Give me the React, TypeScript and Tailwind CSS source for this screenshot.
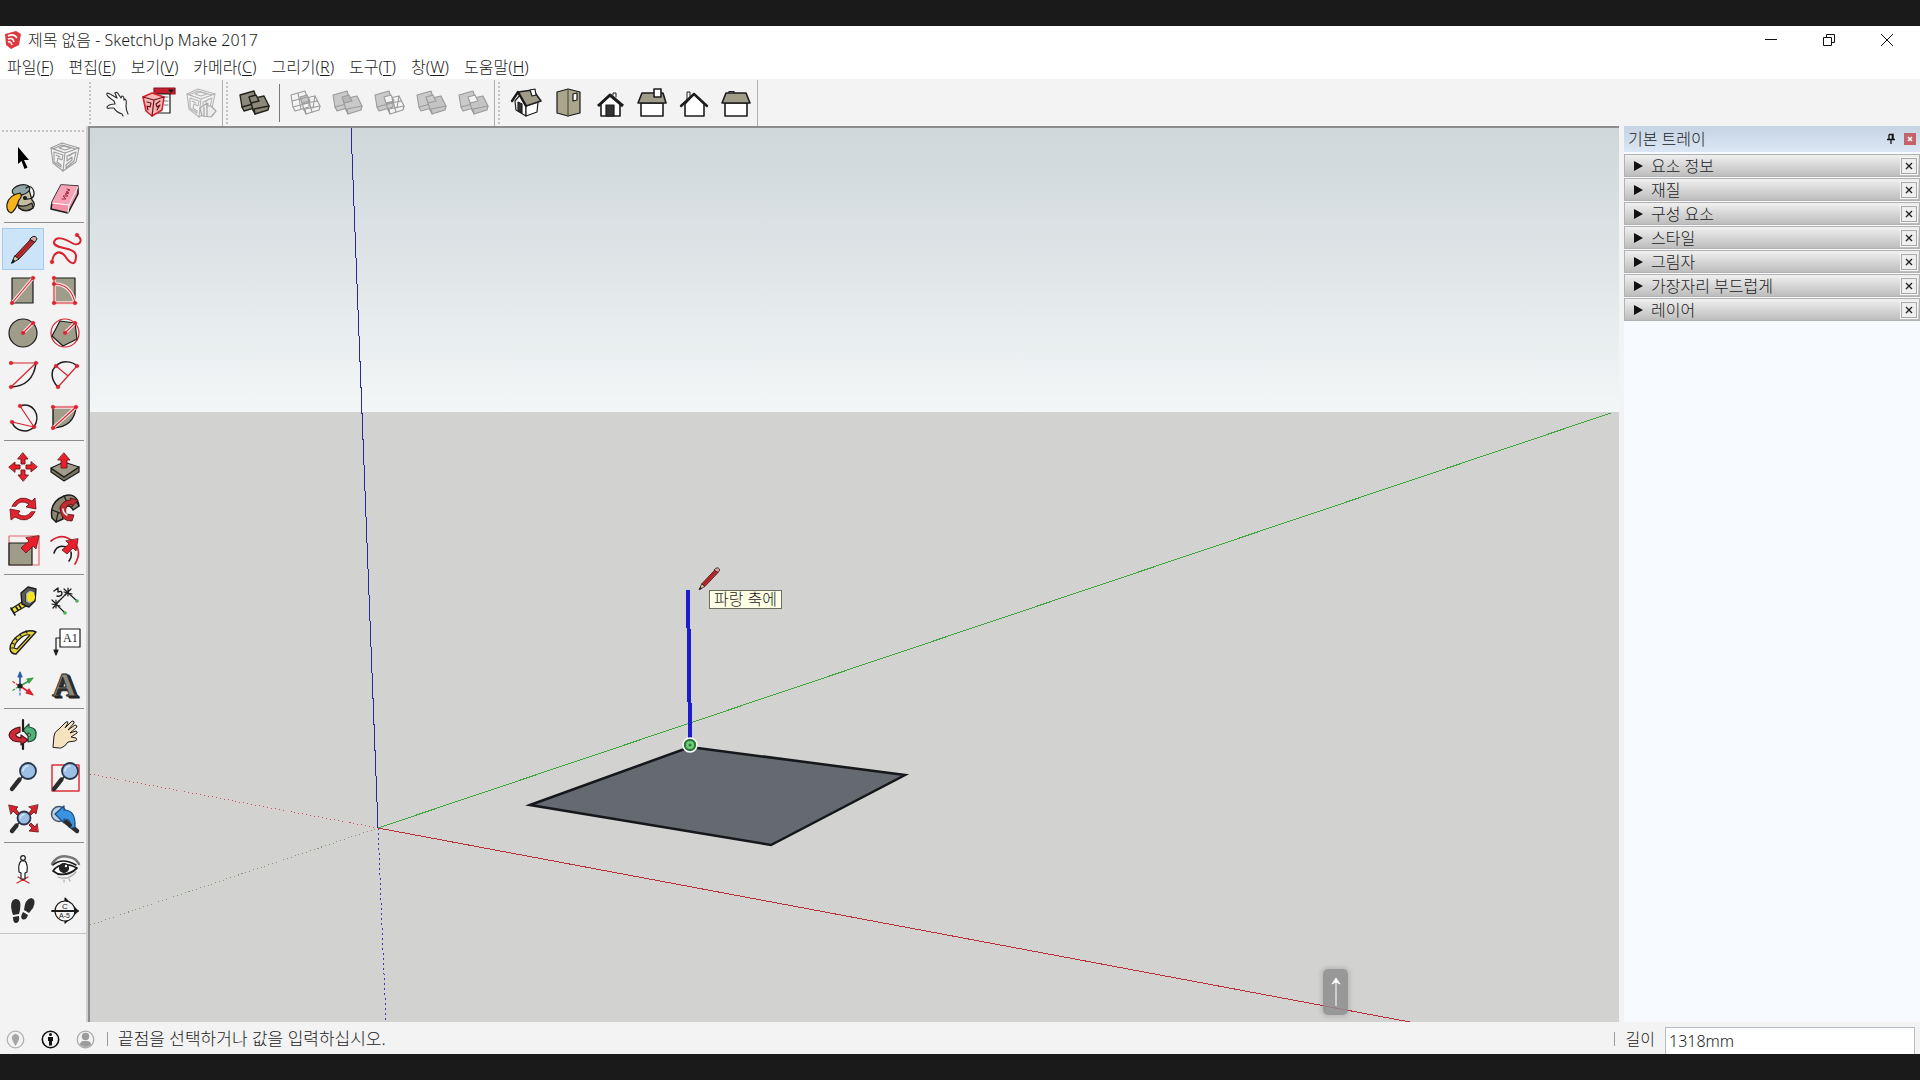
import type { ReactNode } from 'react';

type Tool = { label: string; icon: ReactNode; active?: boolean };

const RED = '#d8232f';
const INK = '#1c1c1c';
const STONE = '#9f9c8a';

/* ---------- icon helpers ---------- */

function Icon({ children }: { children: ReactNode }) {
  return (
    <svg
      viewBox="0 0 42 42"
      className="h-[42px] w-[42px]"
      fill="none"
      stroke={INK}
      strokeWidth="1.2"
      strokeLinejoin="round"
      strokeLinecap="round"
      aria-hidden="true"
    >
      {children}
    </svg>
  );
}

function Dots({ at }: { at: number[][] }) {
  return (
    <>
      {at.map(([x, y]) => (
        <circle key={`${x}-${y}`} cx={x} cy={y} r="1.8" fill={RED} stroke={RED} strokeWidth="0.6" />
      ))}
    </>
  );
}

function RedLine({ d }: { d: string }) {
  return (
    <>
      <path d={d} stroke="#fbe3e3" strokeWidth="3.4" />
      <path d={d} stroke={RED} strokeWidth="1.1" />
    </>
  );
}

function Pencil() {
  return (
    <>
      <path d="M13 28 L29 11 L33 14 L17 31 Z" fill="#c42a2e" strokeWidth="1" />
      <path d="M15 29 L31 12" stroke="#8d1a1e" strokeWidth="1" />
      <path d="M28 11 L30 9 Q34 7 35 11 L33 14 Z" fill="#d9a5a0" strokeWidth="1" />
      <path d="M13 28 L17 31 L10 35 Z" fill="#d8c69c" strokeWidth="1" />
      <path d="M11.5 32 L13 33.4 L10 35 Z" fill={INK} strokeWidth="1" />
    </>
  );
}

function Lens({ x, y, r }: { x: number; y: number; r: number }) {
  const hx = x - r * 0.7;
  const hy = y + r * 0.7;
  return (
    <>
      <path d={`M${hx} ${hy} L9 33`} stroke="#2b2b2b" strokeWidth="1.6" />
      <path d={`M${hx - 3} ${hy + 3} L10 33`} stroke="#2b2b2b" strokeWidth="4.4" />
      <circle cx={x} cy={y} r={r} fill="#9cbfe6" stroke="#28374a" strokeWidth="1.8" />
      <path d={`M${x - r + 3} ${y} A${r - 3} ${r - 3} 0 0 1 ${x} ${y - r + 3}`} stroke="#d8e8f8" strokeWidth="1.4" />
    </>
  );
}

// two overlapping boxes, drawn filled or as wireframe
function Solids({ back, front, mid, dark }: { back: string; front: string; mid: string; dark?: boolean }) {
  const line = dark ? '#24241f' : '#9a9a9a';
  return (
    <Icon>
      <g stroke={line} strokeWidth={dark ? 1.4 : 1.1}>
        <path d="M7 13 L21 9 L25 21 L25 25 L11 29 L9 25 Z" fill={back} />
        <path d="M9 25 L24 21" />
        <path d="M17 17 L31 14 L36 24 L35 28 L22 32 L20 28 Z" fill={front} />
        <path d="M20 28 L21 27 L36 24 M21 27 L22 32" />
        <path d="M16 15 L23 13 L26 19 L18 21 Z" fill={mid} />
        {back === 'none' && <path d="M14 11 L17 27 M8 19 L23 15" />}
        {front === 'none' && <path d="M24 16 L28 30 M18 22 L33 19 M31 14 L29 26" />}
      </g>
    </Icon>
  );
}

function CubeMark({ color }: { color: string }) {
  return (
    <g stroke={color} strokeWidth="1.1">
      <path d="M7 12 L18 7 L35 12 L32 26 L19 35 L9 27 Z" />
      <path d="M9 13 L18 9 L32 13 L21 17 Z M7 12 L21 17 L19 35 M35 12 L21 17" />
      <path d="M10 16 L19 19 L18 24 L14 22 L13 26 L17 29 L17 31 L10 26 Z" />
      <path d="M32 16 L23 20 L23 25 L28 21 L28 24 L22 29 L22 32 L30 25 Z" />
      <path d="M15 12 L20 10 L27 12 L21 14 Z M12 19 L16 21 M25 20 L29 17" />
    </g>
  );
}

/* ---------- top toolbar ---------- */

const startTools: Tool[] = [
  {
    label: '손',
    icon: (
      <Icon>
        <path
          d="M11 13 Q10 10 14 12 L21 16 L19 11 Q21 9 23 13 L25 16 L26 14 Q28 14 28 18 L29 17 Q31 18 30 24 Q30 28 32 32 M11 13 Q12 15 18 19 L19 22 Q13 22 11 25 Q11 27 14 26 L18 26 Q20 30 26 32 L27 34"
          stroke="#333"
          fill="#fbfbfb"
        />
      </Icon>
    ),
  },
  {
    label: '3D Warehouse',
    icon: (
      <Icon>
        <rect x="16" y="6" width="21" height="6" fill="#c4202f" stroke="#8b1220" />
        <path d="M31 8 H35 L33 10 Z" fill={INK} />
        <path d="M19 12 H32 V31 H20 Z" fill="#fff" />
        <path d="M26 15 H30 M26 19 H30 M26 23 H30" stroke="#777" />
        <path d="M5 15 L14 11 L26 15 L24 28 L14 34 L8 29 Z" fill="#f3b9b9" stroke={RED} strokeWidth="1.6" />
        <path d="M5 15 L16 18 L14 34 M16 18 L26 15 M9 20 L13 21 L12 25 L9 24 L10 28 M22 19 L18 22 L19 25 L22 23 L19 28" stroke="#701018" />
      </Icon>
    ),
  },
  {
    label: '구성 요소 공유',
    icon: (
      <Icon>
        <CubeMark color="#b4b4b4" />
        <path d="M20 26 L27 21 L27 24 L31 24 L36 29 L31 35 L22 34 Z" fill="#ececec" stroke="#a8a8a8" />
        <path d="M24 25 V34 M27 24 V34" stroke="#a8a8a8" />
      </Icon>
    ),
  },
];

const shellTool: Tool = {
  label: '외부 쉘',
  icon: <Solids dark back="#8c897a" front="#8c897a" mid="#8c897a" />,
};

const solidTools: Tool[] = [
  { label: '교차', icon: <Solids back="none" front="none" mid="#c6c6c6" /> },
  { label: '결합', icon: <Solids back="#cacaca" front="#cacaca" mid="#b6b6b6" /> },
  { label: '빼기', icon: <Solids back="#cacaca" front="none" mid="#f3f3f3" /> },
  { label: '트림', icon: <Solids back="#cacaca" front="#c4c4c4" mid="#cacaca" /> },
  { label: '분할', icon: <Solids back="#cacaca" front="#c4c4c4" mid="#f3f3f3" /> },
];

const viewTools: Tool[] = [
  {
    label: '등각투영',
    icon: (
      <Icon>
        <path d="M10 19 L15 13 L21 23 L21 34 L11 28 Z" fill="#fff" />
        <path d="M21 24 L33 20 L32 30 L21 34 Z" fill="#fff" />
        <path d="M13 20 L17 22 V31 L13 28 Z" fill="#333" />
        <path d="M13 10 L28 8 L36 19 L21 24 Z" fill={STONE} stroke="#222" strokeWidth="1.6" />
        <path d="M7 19 L13 10 L21 24" strokeWidth="2.4" />
        <path d="M25 8 L30 7 L31 13 L27 14 Z" fill="#fff" />
      </Icon>
    ),
  },
  {
    label: '위',
    icon: (
      <Icon>
        <path d="M10 10 L21 7 L33 10 V31 L21 34 L10 31 Z" fill="#aaa58d" />
        <path d="M21 7 V34" stroke="#55523f" />
        <path d="M26 12 L30 11 V18 L26 19 Z" fill="#fff" />
      </Icon>
    ),
  },
  {
    label: '앞',
    icon: (
      <Icon>
        <path d="M12 22 V34 H31 V22 L21 13 Z" fill="#fff" strokeWidth="1.6" />
        <path d="M24 13 V11 H27 V15" strokeWidth="1" />
        <path d="M9 24 L21 13 L34 24" strokeWidth="3" strokeLinecap="butt" />
        <rect x="17" y="23" width="8" height="11" fill="#333" />
      </Icon>
    ),
  },
  {
    label: '오른쪽',
    icon: (
      <Icon>
        <rect x="10" y="21" width="22" height="13" fill="#fff" strokeWidth="1.6" />
        <path d="M11 11 H32 L35 21 H7 Z" fill={STONE} strokeWidth="1.6" />
        <rect x="23" y="7" width="7" height="8" fill="#fff" strokeWidth="1.6" />
      </Icon>
    ),
  },
  {
    label: '뒤',
    icon: (
      <Icon>
        <path d="M14 18 V10 H17 V16" fill="#fff" strokeWidth="1" />
        <path d="M12 22 V34 H31 V22 L21 12 Z" fill="#fff" strokeWidth="1.6" />
        <path d="M8 24 L21 12 L34 24" strokeWidth="2.4" />
      </Icon>
    ),
  },
  {
    label: '왼쪽',
    icon: (
      <Icon>
        <rect x="10" y="21" width="22" height="13" fill="#fff" strokeWidth="1.6" />
        <path d="M14 11 V9.5 H19 V11" />
        <path d="M11 11 H31 L35 21 H7 Z" fill={STONE} strokeWidth="1.6" />
      </Icon>
    ),
  },
];

/* ---------- left palette ---------- */

const palette: Tool[][] = [
  [
    {
      label: '선택',
      icon: (
        <Icon>
          <path d="M16 11 V28 L19.5 25 L22.5 33 L25.5 31.5 L22 24 H27 Z" fill="#000" stroke="none" />
        </Icon>
      ),
    },
    { label: '구성 요소 만들기', icon: <Icon><CubeMark color="#9b9b9b" /></Icon> },
    {
      label: '페인트통',
      icon: (
        <Icon>
          <path d="M11 12 L17 30 Q24 36 31 30 Q34 26 30 22 L26 8 Z" fill="#c5bd9f" />
          <path d="M17 30 Q24 35 31 30 L30 25 Q22 30 16 27 Z" fill="#8d8770" />
          <ellipse cx="19" cy="12" rx="9" ry="5" transform="rotate(-14 19 12)" fill="#8fa5a6" />
          <path d="M5 26 Q7 17 18 15 Q21 18 17 22 Q14 32 9 35 Q4 33 5 26 Z" fill="#f6b31c" />
          <path d="M24 10 Q30 6 32 14 Q33 22 23 21" />
          <circle cx="23" cy="20" r="1.5" fill={INK} />
        </Icon>
      ),
    },
    {
      label: '지우개',
      icon: (
        <Icon>
          <path d="M17 7 L34 8 L34 16 L24 35 L7 31 L8 24 Z" fill="#f28fa6" strokeWidth="1.6" />
          <path d="M17 7 L34 8 L25 27 L8 24 Z" fill="#f6a3b5" stroke="none" />
          <path d="M8 25 L25 27 L34 9 M25 27 L24 35" stroke="#fff" strokeWidth="1" />
          <path d="M23 11 L26 12 L22 14 L25 15 L21 16 L24 18 L19 18 L22 21 L18 21" stroke="#9c2a43" strokeWidth="1" />
        </Icon>
      ),
    },
  ],
  [
    { label: '선', active: true, icon: <Icon><Pencil /></Icon> },
    {
      label: '자유곡선',
      icon: (
        <Icon>
          <path
            d="M33 7 C41 13 34 19 28 15 C20 10 12 8 10 14 C9 22 32 18 32 28 C32 39 26 36 21 28 C15 21 9 25 8 34"
            stroke={RED}
            strokeWidth="2"
          />
          <Dots at={[[33, 7], [8, 34]]} />
        </Icon>
      ),
    },
    {
      label: '직사각형',
      icon: (
        <Icon>
          <rect x="10" y="8" width="21" height="25" fill={STONE} />
          <RedLine d="M10 33 L31 8" />
          <Dots at={[[10, 33], [31, 8]]} />
        </Icon>
      ),
    },
    {
      label: '회전된 직사각형',
      icon: (
        <Icon>
          <rect x="10" y="8" width="21" height="25" fill={STONE} />
          <RedLine d="M10 14 Q27 14 31 33 H10 V8" />
          <Dots at={[[10, 8], [10, 14], [10, 33], [31, 33]]} />
        </Icon>
      ),
    },
    {
      label: '원',
      icon: (
        <Icon>
          <circle cx="21" cy="21" r="14" fill={STONE} />
          <RedLine d="M21 21 L31 11" />
          <Dots at={[[21, 21], [31, 11]]} />
        </Icon>
      ),
    },
    {
      label: '다각형',
      icon: (
        <Icon>
          <circle cx="21" cy="21" r="14" stroke={RED} />
          <path d="M16 9 L31 11 L33 27 L19 34 L8 24 Z" fill={STONE} />
          <RedLine d="M21 21 L31 11" />
          <Dots at={[[21, 21], [31, 11]]} />
        </Icon>
      ),
    },
    {
      label: '호',
      icon: (
        <Icon>
          <path d="M34 9 Q31 32 9 33" strokeWidth="1.5" />
          <path d="M9 9 H34 L9 33" stroke={RED} />
          <Dots at={[[9, 9], [34, 9], [9, 33]]} />
        </Icon>
      ),
    },
    {
      label: '2점 호',
      icon: (
        <Icon>
          <path d="M14 33 C6 25 7 16 12 12 C18 6 28 7 33 12" strokeWidth="1.5" />
          <path d="M14 33 L33 12 M12 12 L24 22" stroke={RED} />
          <Dots at={[[14, 33], [33, 12], [12, 12]]} />
        </Icon>
      ),
    },
    {
      label: '3점 호',
      icon: (
        <Icon>
          <path d="M18 10 C30 5 40 19 32 31 C25 38 13 35 10 26" strokeWidth="1.5" />
          <path d="M18 10 L32 31 L10 26" stroke={RED} />
          <Dots at={[[18, 10], [32, 31], [10, 26]]} />
        </Icon>
      ),
    },
    {
      label: '파이',
      icon: (
        <Icon>
          <path d="M9 11 H32 Q30 31 9 32 Z" fill={STONE} strokeWidth="1.4" />
          <RedLine d="M9 32 L32 11 H9" />
          <Dots at={[[9, 11], [32, 11], [9, 32]]} />
        </Icon>
      ),
    },
  ],
  [
    {
      label: '이동',
      icon: (
        <Icon>
          {[0, 90, 180, 270].map((a) => (
            <path
              key={a}
              d="M21 7 L26 13 H23 V18 H19 V13 H16 Z"
              transform={`rotate(${a} 21 21)`}
              fill="#e8202c"
              stroke="#611"
              strokeWidth="0.9"
            />
          ))}
        </Icon>
      ),
    },
    {
      label: '밀기/끌기',
      icon: (
        <Icon>
          <path d="M7 22 L20 31 L35 21 V26 L20 35 L7 26 Z" fill="#76735f" />
          <path d="M7 22 L20 16 L35 21 L20 31 Z" fill={STONE} />
          <path d="M20 7 L26 14 H23 V22 H17 V14 H14 Z" fill="#e8202c" stroke="#611" strokeWidth="0.8" />
        </Icon>
      ),
    },
    {
      label: '회전',
      icon: (
        <Icon>
          <g fill="#e02430" stroke="#611" strokeWidth="0.8">
            <path d="M10 18 Q17 5 30 13 L33 10 L34 21 L24 19 L27 16 Q18 11 14 18 Z" />
            <path d="M33 24 Q26 37 13 29 L9 32 L8 21 L18 23 L16 26 Q24 31 29 24 Z" />
          </g>
        </Icon>
      ),
    },
    {
      label: '따라가기',
      icon: (
        <Icon>
          <path d="M8 30 Q5 14 20 8 Q33 4 35 18 L29 22 Q25 14 18 22 L19 31 L12 34 Z" fill="#8a8671" strokeWidth="1.5" />
          <path d="M20 8 L24 16 M35 18 L31 12 M8 22 L16 25 M12 34 L14 25" />
          <path d="M16 20 Q18 12 27 12 L26 10 L34 12 L28 19 L28 16 Q20 17 22 26 L30 27 L28 33 Q17 34 16 20 Z" fill="#c42a31" stroke="#511" strokeWidth="0.8" />
          <path d="M19 21 Q19 25 23 27" stroke="#f5f5f5" strokeWidth="1.5" />
        </Icon>
      ),
    },
    {
      label: '배율',
      icon: (
        <Icon>
          <rect x="7" y="6" width="30" height="29" stroke="#e06a70" fill="#f8efef" />
          <rect x="7" y="13" width="23" height="22" fill={STONE} />
          <path d="M37 6 L34 19 L31 16 L24 23 L19 18 L27 11 L24 8 Z" fill="#e8202c" stroke="#611" strokeWidth="0.8" />
        </Icon>
      ),
    },
    {
      label: '오프셋',
      icon: (
        <Icon>
          <path d="M7 11 Q20 1 31 14 Q38 22 31 34" stroke={RED} strokeWidth="1.7" />
          <path d="M10 23 Q13 14 22 17 M27 22 Q28 27 25 31" strokeWidth="1.6" />
          <path d="M34 9 L32 21 L29 18 L23 24 L18 20 L25 14 L22 11 Z" fill="#e8202c" stroke="#611" strokeWidth="0.8" />
        </Icon>
      ),
    },
  ],
  [
    {
      label: '줄자',
      icon: (
        <Icon>
          <path d="M9 29 L20 22 L24 26 L12 33 Z" fill="#f2e22c" />
          <path d="M9 28 L13 35 M14 27 L16 30 M17 25 L19 28" strokeWidth="1.6" />
          <path d="M19 13 L26 7 L34 9 L33 21 L27 27 L20 24 Z" fill="#5a5a5a" strokeWidth="1.4" />
          <path d="M24 13 L28 10 L33 12 L32 20 L28 24 L24 22 Z" fill="#b9b9b9" strokeWidth="0.6" />
          <ellipse cx="29" cy="17" rx="4" ry="5" fill="#f4e61e" stroke="none" />
        </Icon>
      ),
    },
    {
      label: '치수',
      icon: (
        <Icon>
          <path d="M12 24 L24 12 M20 9 L33 21 M8 20 L21 33" />
          <path d="M24 8 V16 M20 12 L28 14 M21 15 L27 9 M12 20 V28 M8 24 L16 26 M9 28 L15 21" strokeWidth="1.2" />
          <path d="M10 11 L14 8 L14 12 Q18 10 18 14 Q17 17 13 16" strokeWidth="1.4" />
          <circle cx="33" cy="21" r="1.8" fill="#46b552" stroke="none" />
          <circle cx="21" cy="33" r="1.8" fill="#46b552" stroke="none" />
        </Icon>
      ),
    },
    {
      label: '각도기',
      icon: (
        <Icon>
          <path d="M14 32 L34 10 Q28 7 20 11 Q8 18 8 27 Q9 32 14 32 Z" fill="#e5d23a" strokeWidth="1.4" />
          <path d="M15 27 L28 13 Q24 12 20 15 Q13 20 12 26 Z" fill="#f5f5f5" />
          <path d="M10 21 L12 22 M13 16 L15 18 M18 12 L19 14 M9 26 H11 M24 9 L25 11" />
        </Icon>
      ),
    },
    {
      label: '텍스트',
      icon: (
        <Icon>
          <rect x="16" y="7" width="20" height="18" fill="#fff" />
          <text x="19" y="20" fontSize="12" fill="#222" stroke="none" fontFamily="Liberation Serif, serif">A1</text>
          <path d="M16 16 H12 V28" />
          <path d="M10 28 H14 L12 33 Z" fill={INK} />
        </Icon>
      ),
    },
    {
      label: '축',
      icon: (
        <Icon>
          <path d="M18 22 V13" stroke="#2b5fae" strokeWidth="1.8" />
          <path d="M16 13 L18 8 L20 13 Z" fill="#2b5fae" stroke="#2b5fae" />
          <path d="M18 22 L27 17" stroke="#3ca04a" strokeWidth="1.8" />
          <path d="M25 15 L31 14 L27 19 Z" fill="#3ca04a" stroke="#3ca04a" />
          <path d="M18 22 L27 28" stroke={RED} strokeWidth="1.8" />
          <path d="M27 25 L31 31 L24 29 Z" fill={RED} stroke={RED} />
          <path d="M18 25 V33" stroke="#2b5fae" strokeDasharray="2 2" />
          <path d="M16 23 L10 27" stroke="#3ca04a" strokeDasharray="2 2" />
          <path d="M16 21 L10 17" stroke={RED} strokeDasharray="2 2" />
          <circle cx="18" cy="22" r="2" fill={INK} />
        </Icon>
      ),
    },
    {
      label: '3D 텍스트',
      icon: (
        <Icon>
          <g fontFamily="Liberation Serif, serif" fontWeight="700" fontSize="34" strokeWidth="0.8">
            <text x="11" y="34" fill="#3a3a36" stroke="#222">A</text>
            <text x="10" y="33" fill="#3a3a36" stroke="#222">A</text>
            <text x="8" y="32" fill="#8a887c" stroke="#222">A</text>
          </g>
        </Icon>
      ),
    },
  ],
  [
    {
      label: '궤도',
      icon: (
        <Icon>
          <path d="M21 16 L27 10 L27 13 Q35 14 34 21 Q34 27 26 28 L26 23 Q31 21 26 19 L26 22 Z" fill="#52b07a" stroke="#1d4a30" />
          <path d="M18 13 Q8 15 7 21 Q8 28 19 28 L19 31 L26 26 L19 21 L19 24 Q13 23 14 20 L18 18 Z" fill="#cf2a3a" stroke="#511" />
          <path d="M21 6 V17 M21 30 V35" strokeWidth="2.2" />
        </Icon>
      ),
    },
    {
      label: '팬',
      icon: (
        <Icon>
          <path
            d="M9 33 L10 22 Q10 18 15 15 L22 8 Q24 7 24 9 L21 14 L28 7 Q31 7 30 9 L24 16 L31 11 Q33 11 33 13 L26 19 L32 17 Q34 18 33 19 L27 23 L32 24 Q34 26 31 27 L24 28 Q21 33 17 34 Z"
            fill="#f7e2bf"
            strokeWidth="1"
          />
        </Icon>
      ),
    },
    { label: '확대/축소', icon: <Icon><Lens x={26} y={15} r={8} /></Icon> },
    {
      label: '확대/축소 창',
      icon: (
        <Icon>
          <rect x="8" y="9" width="27" height="26" stroke="#e0303a" strokeWidth="1.5" />
          <Lens x={26} y={15} r={8} />
        </Icon>
      ),
    },
    {
      label: '확대/축소 범위',
      icon: (
        <Icon>
          <Lens x={22} y={20} r={6.5} />
          <g fill="#d8232f" stroke="#611" strokeWidth="0.8">
            <path d="M7 7 L16 9 L14 11 L17 15 L15 17 L11 13 L9 16 Z" />
            <path d="M36 7 L34 16 L32 14 L29 17 L27 15 L30 11 L27 9 Z" />
            <path d="M36 34 L27 33 L30 30 L27 27 L29 25 L33 29 L35 26 Z" />
          </g>
        </Icon>
      ),
    },
    {
      label: '이전',
      icon: (
        <Icon>
          <circle cx="15" cy="16" r="7.5" fill="#b9d2ea" stroke="#46566a" strokeWidth="1.5" />
          <path d="M22 24 L33 33" stroke="#2b2b2b" strokeWidth="4.4" />
          <path d="M11 16 L20 8 V12 Q32 12 31 29 Q28 31 25 29 Q28 21 20 21 V25 Z" fill="#3b93e0" stroke="#174a80" />
          <path d="M22 24 L26 27" stroke="#2b2b2b" strokeWidth="4" />
        </Icon>
      ),
    },
  ],
  [
    {
      label: '카메라 배치',
      icon: (
        <Icon>
          <path d="M15 35 L26 29 M16 29 L27 35" stroke={RED} strokeWidth="1.2" />
          <path d="M19 13 Q16 16 17 24 L19 25 V31 H23 V25 L25 24 Q26 16 23 13 Z" fill="#fff" />
          <circle cx="21" cy="10" r="2.3" fill="#fff" />
        </Icon>
      ),
    },
    {
      label: '둘러보기',
      icon: (
        <Icon>
          <path d="M8 16 Q14 6 25 9 Q32 10 35 16" stroke="#777" strokeWidth="2.5" />
          <path d="M9 23 Q17 12 33 20 Q25 28 14 26 Z" fill="#fff" strokeWidth="1.8" />
          <circle cx="20" cy="20" r="4.5" fill="#222" />
          <circle cx="22" cy="18" r="1.2" fill="#fff" stroke="none" />
          <path d="M14 29 Q24 33 32 24 M20 32 V34 M25 31 L26 33" stroke="#aaa" />
          <path d="M9 17 Q18 9 32 17" strokeWidth="1.5" />
        </Icon>
      ),
    },
    {
      label: '걷기',
      icon: (
        <Icon>
          <g fill="#2b2b2b" stroke="none">
            <path d="M10 22 Q7 11 13 9 Q20 8 18 20 L17 24 L11 25 Z" />
            <path d="M11 27 L17 26 Q18 33 14 33 Q11 33 11 27 Z" />
            <path d="M22 20 Q23 9 29 8 Q35 9 31 18 L27 23 Z" />
            <path d="M21 22 L26 25 Q24 31 20 29 Q18 27 21 22 Z" />
          </g>
        </Icon>
      ),
    },
    {
      label: '단면 평면',
      icon: (
        <Icon>
          <path d="M21 8 L34 21 L21 33 Z" fill={INK} />
          <circle cx="21" cy="21" r="10" fill="#f5f5f5" strokeWidth="1.2" />
          <path d="M8 21 H34" strokeWidth="1.8" />
          <text x="18" y="19" fontSize="8" fill="#222" stroke="none" fontFamily="Liberation Sans, sans-serif">C</text>
          <text x="15" y="28" fontSize="7" fill="#222" stroke="none" fontFamily="Liberation Sans, sans-serif">A-5</text>
        </Icon>
      ),
    },
  ],
];

const menus = [
  ['파일', 'F'],
  ['편집', 'E'],
  ['보기', 'V'],
  ['카메라', 'C'],
  ['그리기', 'R'],
  ['도구', 'T'],
  ['창', 'W'],
  ['도움말', 'H'],
];

const trayPanels = ['요소 정보', '재질', '구성 요소', '스타일', '그림자', '가장자리 부드럽게', '레이어'];

function ToolButton({ tool }: { tool: Tool }) {
  return (
    <button
      type="button"
      aria-label={tool.label}
      className={`h-[42px] w-[42px] shrink-0 ${tool.active ? 'bg-[#cce4f7] outline outline-1 -outline-offset-1 outline-[#a3cbee]' : ''}`}
    >
      {tool.icon}
    </button>
  );
}

function ToolGroup({ children }: { children: ReactNode }) {
  return (
    <div className="flex items-center border-r border-[#b0b0b0] pl-[3px]">
      <div className="mr-[5px] h-[42px] border-l-2 border-dotted border-[#c4c4c4]" />
      {children}
    </div>
  );
}

function TitleBar() {
  return (
    <header className="flex h-[28px] items-center bg-white pr-1 pl-1">
      <svg viewBox="0 0 18 20" className="h-5 w-[18px]" aria-hidden="true">
        <path d="M1 4 L12 1 L17 4 L15 15 L7 19 L2 15 Z" fill="#dc3a40" />
        <path d="M4 6 Q10 3 13 8 M4 9 Q9 7 10 12 M4 12 Q7 11 8 15" stroke="#fff" strokeWidth="1.5" fill="none" />
      </svg>
      <h1 className="ml-[6px] flex-1 text-[16px] font-light">제목 없음 - SketchUp Make 2017</h1>
      <button type="button" aria-label="최소화" className="flex h-full w-[58px] items-center justify-center">
        <svg viewBox="0 0 12 12" className="h-3 w-3" stroke="#111" fill="none"><path d="M0 5.5 H12" /></svg>
      </button>
      <button type="button" aria-label="이전 크기로" className="flex h-full w-[58px] items-center justify-center">
        <svg viewBox="0 0 14 14" className="h-[14px] w-[14px]" stroke="#111" fill="none">
          <path d="M1.5 4.5 H9.5 V12.5 H1.5 Z M4.5 4.5 V1.5 H12.5 V9.5 H9.5" />
        </svg>
      </button>
      <button type="button" aria-label="닫기" className="flex h-full w-[58px] items-center justify-center">
        <svg viewBox="0 0 14 14" className="h-[14px] w-[14px]" stroke="#111" fill="none"><path d="M1 1 L13 13 M13 1 L1 13" /></svg>
      </button>
    </header>
  );
}

function Viewport() {
  return (
    <main className="relative min-w-0 flex-1 overflow-hidden border-t-2 border-l-2 border-[#8a8c8e]">
      <svg
        viewBox="90 128 1529 894"
        preserveAspectRatio="none"
        className="absolute inset-0 h-full w-full"
        fill="none"
        aria-label="모델 뷰"
      >
        <defs>
          <linearGradient id="sky" x1="0" y1="0" x2="0" y2="1">
            <stop offset="0" stopColor="#cfd7da" />
            <stop offset="0.5" stopColor="#e0e6e8" />
            <stop offset="1" stopColor="#f3f6f7" />
          </linearGradient>
        </defs>
        <rect x="90" y="128" width="1529" height="284" fill="url(#sky)" />
        <rect x="90" y="412" width="1529" height="610" fill="#d2d2d0" />

        <g shapeRendering="crispEdges">
          <path d="M90 774 L378 828" stroke="#d05058" strokeDasharray="1 3" />
          <path d="M90 925 L378 828" stroke="#7f9a7c" strokeDasharray="1 3" />
          <path d="M378 828 L386 1022" stroke="#3c3cb0" strokeDasharray="2 3" />
          <path d="M351 128 L378 828" stroke="#2a2a9c" />
          <path d="M378 828 L1611 413" stroke="#3fa63f" />
          <path d="M378 828 L1410 1022" stroke="#b8303a" />
        </g>

        <path d="M530 805 L690 747 L905 775 L771 845 Z" fill="#646a70" stroke="#15171a" strokeWidth="2.5" />
        <path d="M688 590 L690 738" stroke="#1d1bd0" strokeWidth="4" shapeRendering="crispEdges" />
        <circle cx="690" cy="745" r="7" fill="#2f7a3a" stroke="#fff" strokeWidth="1.6" />
        <circle cx="690" cy="745" r="4" fill="#6fcf76" />
        <circle cx="690" cy="745" r="1.5" fill="#2f7a3a" />

        <g transform="translate(691 561) scale(0.82)" stroke="#3a1a1a" strokeLinejoin="round">
          <Pencil />
        </g>
      </svg>

      <div
        role="tooltip"
        className="absolute top-[462px] left-[619px] h-[19px] border border-[#6c6c60] bg-[#ffffe6] px-1 text-[16px] leading-[17px] font-light"
      >
        파랑 축에
      </div>
      <kbd
        className="absolute bottom-[7px] left-[1233px] flex h-[46px] w-[25px] items-center justify-center rounded-[5px] bg-[#8e8e8e]/85 shadow-[0_0_4px_2px_rgba(0,0,0,0.12)]"
        aria-label="위쪽 화살표"
      >
        <svg viewBox="0 0 12 30" className="h-[30px] w-3" stroke="#e4e4e4" strokeWidth="1.4" fill="none">
          <path d="M6 29 V2" />
          <path d="M2 7 L6 1 L10 7 L6 5 Z" fill="#fff" stroke="#fff" strokeWidth="0.8" />
        </svg>
      </kbd>
    </main>
  );
}

function Tray() {
  return (
    <aside className="ml-[5px] w-[296px] shrink-0 bg-[#f7faff]">
      <div className="flex h-[26px] items-center bg-gradient-to-b from-[#c5d3e2] to-[#dce7f5] pr-1 pl-1">
        <h2 className="flex-1 text-[16px] font-light">기본 트레이</h2>
        <button type="button" aria-label="자동 숨기기" className="mr-2">
          <svg viewBox="0 0 10 12" className="h-3 w-[10px]" stroke="#111" fill="none">
            <path d="M3 1.5 H7 V6.5 M3 1.5 V6.5 M1 6.5 H9 M5 7 V11" strokeWidth="1.3" />
            <path d="M6.5 1.5 V6" strokeWidth="1.6" />
          </svg>
        </button>
        <button type="button" aria-label="트레이 닫기" className="flex h-3 w-3 items-center justify-center bg-[#c4646a]">
          <svg viewBox="0 0 6 6" className="h-[6px] w-[6px]" stroke="#fff" strokeWidth="1.5"><path d="M1 1 L5 5 M5 1 L1 5" /></svg>
        </button>
      </div>
      <div className="flex flex-col gap-px pt-[2px]">
        {trayPanels.map((name) => (
          <section
            key={name}
            className="flex h-[23px] items-center border border-[#b2b2b2] bg-gradient-to-b from-[#f0f0f0] to-[#bdbdbd] pr-[2px] pl-[9px]"
          >
            <button type="button" className="flex flex-1 items-center gap-2 text-left text-[16px] leading-5 font-light">
              <svg viewBox="0 0 9 10" className="h-[10px] w-[9px]" aria-hidden="true"><path d="M0 0 L9 5 L0 10 Z" fill="#111" /></svg>
              {name}
            </button>
            <button
              type="button"
              aria-label={`${name} 닫기`}
              className="flex h-4 w-4 items-center justify-center border border-[#a8a8a8] bg-[#efefef] outline outline-1 outline-[#f6f6f6]"
            >
              <svg viewBox="0 0 8 8" className="h-2 w-2" stroke="#222" strokeWidth="1.4"><path d="M1 1 L7 7 M7 1 L1 7" /></svg>
            </button>
          </section>
        ))}
      </div>
    </aside>
  );
}

function StatusBar() {
  return (
    <footer className="flex h-[32px] items-center overflow-hidden bg-[#f3f3f3] pt-[2px] pr-[5px] pl-[6px] font-light">
      <div className="flex gap-4">
        <button type="button" aria-label="위치 지정">
          <svg viewBox="0 0 19 19" className="h-[19px] w-[19px]">
            <circle cx="9.5" cy="9.5" r="8.3" fill="none" stroke="#b0b0b0" strokeWidth="1.2" />
            <path d="M9.5 16 Q5 9 6 6.5 Q9.5 1 13 6.5 Q14 9 9.5 16 Z" fill="#a6a6a6" />
          </svg>
        </button>
        <button type="button" aria-label="제작자 정보">
          <svg viewBox="0 0 19 19" className="h-[19px] w-[19px]">
            <circle cx="9.5" cy="9.5" r="8.2" fill="none" stroke="#111" strokeWidth="1.6" />
            <circle cx="9.5" cy="4.5" r="1.5" fill="#111" />
            <path d="M7 7 H12 V11 H11 V15.5 H8 V11 H7 Z" fill="#111" />
          </svg>
        </button>
        <button type="button" aria-label="로그인">
          <svg viewBox="0 0 19 19" className="h-[19px] w-[19px]">
            <circle cx="9.5" cy="9.5" r="8.3" fill="none" stroke="#a8a8a8" strokeWidth="1.2" />
            <circle cx="9.5" cy="6.5" r="3.7" fill="#9c9c9c" />
            <path d="M4 15 Q4 11 8 11 H11 Q15 11 15 15 Q9.5 19 4 15 Z" fill="#9c9c9c" />
          </svg>
        </button>
      </div>
      <p className="ml-3 flex flex-1 items-center text-[17px]">
        <span className="mr-[10px] h-[14px] border-l border-[#999]" />
        끝점을 선택하거나 값을 입력하십시오.
      </p>
      <label htmlFor="length" className="flex items-center text-[16px]">
        <span className="mr-[11px] h-[14px] border-l border-[#999]" />
        길이
      </label>
      <input
        id="length"
        type="text"
        defaultValue="1318mm"
        className="mt-1 ml-[10px] h-[29px] w-[250px] border border-[#b5bcc6] bg-white px-[3px] text-[16px]"
      />
    </footer>
  );
}

export default function App() {
  return (
    <div className="flex min-h-screen flex-col bg-[#1a1a1a] py-[26px] font-['Noto_Sans','Noto_Sans_CJK_KR',sans-serif] text-[#1b1b22]">
      <div className="flex flex-1 flex-col bg-[#f3f3f3]">
        <TitleBar />

        <nav className="flex h-[25px] items-center gap-[15px] bg-white pl-[7px]">
          {menus.map(([name, key]) => (
            <button key={key} type="button" className="text-[16px] leading-6 font-light">
              {name}(<u className="underline-offset-2">{key}</u>)
            </button>
          ))}
        </nav>

        {/* Toolbars */}
        <div className="flex h-[47px] items-stretch pt-px pl-[86px]">
          <ToolGroup>
            {startTools.map((t) => <ToolButton key={t.label} tool={t} />)}
          </ToolGroup>
          <ToolGroup>
            <ToolButton tool={shellTool} />
            <div className="mx-1 h-[38px] border-l border-[#777]" />
            {solidTools.map((t) => <ToolButton key={t.label} tool={t} />)}
          </ToolGroup>
          <ToolGroup>
            {viewTools.map((t) => <ToolButton key={t.label} tool={t} />)}
          </ToolGroup>
        </div>

        <div className="flex flex-1">
          <div className="w-[88px] shrink-0 border-r-2 border-[#d0d0d0]">
            <div className="border-b border-[#c4c4c4] pt-1 pb-px pl-[2px]">
              <div className="mb-1 w-[82px] border-t-2 border-dotted border-[#c4c4c4]" />
              {palette.map((group, i) => (
                <div key={i}>
                  {i > 0 && <hr className="mt-[2px] mb-[5px] ml-[2px] w-[80px] border-[#8c8c8c]" />}
                  <div className="grid w-[84px] grid-cols-2">
                    {group.map((t) => <ToolButton key={t.label} tool={t} />)}
                  </div>
                </div>
              ))}
            </div>
          </div>

          <Viewport />
          <Tray />
        </div>

        <StatusBar />
      </div>
    </div>
  );
}
